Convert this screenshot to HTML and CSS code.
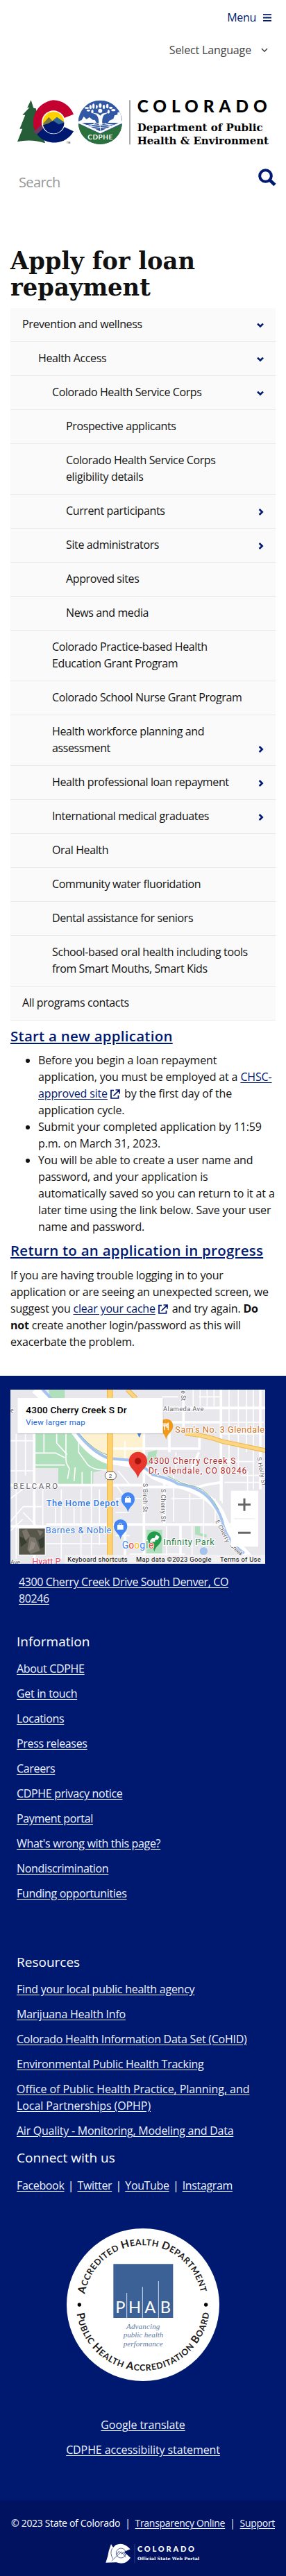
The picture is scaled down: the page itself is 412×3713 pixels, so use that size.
FILE: index.html
```html
<!DOCTYPE html>
<html lang="en">
<head>
<meta charset="utf-8">
<meta name="viewport" content="width=device-width, initial-scale=1">
<title>Apply for loan repayment</title>
<link rel="stylesheet" href="styles.css">
</head>
<body>
<svg width="0" height="0" class="defs">
  <symbol id="down" viewBox="0 0 10 8"><path d="M1 1.6 5 5.5 9 1.6" fill="none" stroke="currentColor" stroke-width="2.6"/></symbol>
  <symbol id="right" viewBox="0 0 8 10"><path d="M1.6 1 5.7 5 1.6 9" fill="none" stroke="currentColor" stroke-width="2.6"/></symbol>
  <symbol id="ext" viewBox="0 0 14 14"><path d="M5 1.7H1V13H11.5V9M7.5 1H13V6.5M12.6 1.4 4.5 9.5" fill="none" stroke="currentColor" stroke-width="1.7"/></symbol>
</svg>

<header class="header">
  <a class="menu-btn">Menu <svg width="12" height="11" viewBox="0 0 12 11"><path d="M0 1.2H12M0 5.5H12M0 9.8H12" stroke="currentColor" stroke-width="1.8"/></svg></a>
  <div class="lang">Select Language <svg width="10" height="7" viewBox="0 0 10 7"><path d="M1 1 5 5.2 9 1" fill="none" stroke="currentColor" stroke-width="1.6"/></svg></div>
  <svg class="logo" width="364" height="65" viewBox="75 431 1092 195">
    <path fill="#245d38" d="M134 432 118 464h9L97 496h12L85 556h12L75 612q60-14 120 6l-40-150-10-2Z"/>
    <path fill="#c3002f" d="M230 432a96 96 0 0 1 88 61l-42 17a50 50 0 0 0-86 40l-32 28A96 96 0 0 1 230 432Z"/>
    <path fill="#001970" d="M158 578l40-36a50 50 0 0 0 80 6l40 19a96 96 0 0 1-160 11Z"/>
    <path fill="#6d3a5d" d="M144 570l42-36 8 12-34 34Z"/>
    <circle cx="231" cy="528" r="51" fill="#fff"/><circle cx="231" cy="528" r="46" fill="#ffd100"/>
    <path fill="#7b7a3e" d="m187 532 24-27 18 20-20 45q-24-20-22-38Z"/><path fill="#31699b" d="m228 520 18-15 31 22-9 21Z"/>
    <path fill="#001970" d="m186 540 22-7 22-12 24 16 23-8a46 46 0 0 1-91 11Z"/>
    <text x="287" y="621" font-size="11" font-family="Liberation Sans" textLength="17">TM</text>
    <clipPath id="seal"><circle cx="433" cy="528" r="95"/></clipPath>
    <g clip-path="url(#seal)"><path fill="#3158a4" d="M338 432h191v192H338Z"/>
      <path fill="#fff" d="m338 525 15-7 9-15 12 12 12-9 15 11 9 1 7 12h50l5-9 18-8 5-15 13-3v-9l12-4 6 38 14-6v20H338Z"/>
      <path fill="#3158a4" d="M338 530h191l-96 46Z"/>
      <path fill="none" stroke="#fff" stroke-width="3" d="m375 541 60-8 65 8m-112 7 48-7 52 7m-90 8 37-7 42 8m-66-26-32 20m52-20 4 35m18-35 35 18"/>
      <path fill="none" stroke="#fff" stroke-width="8" d="m338 527 95 44 96-44"/><path fill="#2b713c" d="m338 534 95 44 96-44v90H338Z"/>
      <path fill="#fff" d="M426 538q4-28-10-43l-20-9 27 4 10 9 9-9 29-6-22 12q-11 18-6 42Z"/>
      <g fill="#fff"><circle cx="433" cy="478" r="9"/><ellipse cx="375" cy="466" rx="9" ry="4"/><ellipse cx="391" cy="462" rx="5" ry="9"/><ellipse cx="404" cy="458" rx="5" ry="11"/><ellipse cx="418" cy="461" rx="4" ry="9"/><ellipse cx="433" cy="456" rx="6" ry="10"/><ellipse cx="449" cy="461" rx="5" ry="9"/><ellipse cx="464" cy="458" rx="5" ry="10"/><ellipse cx="479" cy="465" rx="8" ry="5"/><ellipse cx="490" cy="475" rx="9" ry="5"/><ellipse cx="382" cy="477" rx="8" ry="4"/><ellipse cx="399" cy="481" rx="5" ry="8"/><ellipse cx="469" cy="482" rx="5" ry="8"/></g>
      <text x="379" y="603" fill="#fff" font-family="Lato" font-weight="700" font-size="30" textLength="108">CDPHE</text>
    </g>
    <path d="M561 432V624" stroke="#555" stroke-width="3"/>
    <text x="593" y="486" class="lato" font-size="73" textLength="561">COLORADO</text>
    <text x="593" y="567" class="slab" font-size="45" textLength="543" lengthAdjust="spacingAndGlyphs">Department of Public</text>
    <text x="593" y="622" class="slab" font-size="45" textLength="568" lengthAdjust="spacingAndGlyphs">Health &amp; Environment</text>
  </svg>
  <div class="search"><span>Search</span><svg width="26" height="26" viewBox="0 0 26 26"><circle cx="10.5" cy="10.5" r="8.3" fill="none" stroke="#001970" stroke-width="4"/><path d="m16.5 16.5 7.5 7" stroke="#001970" stroke-width="4.6"/></svg></div>
</header>

<main class="main">
  <h1 class="title"><span>Apply for loan</span><span>repayment</span></h1>
  <ul class="nav">
    <li class="l1">Prevention and wellness<svg class="down"><use href="#down"/></svg></li>
    <li class="l2">Health Access<svg class="down"><use href="#down"/></svg></li>
    <li class="l3">Colorado Health Service Corps<svg class="down"><use href="#down"/></svg></li>
    <li class="l4">Prospective applicants</li>
    <li class="l4">Colorado Health Service Corps<br>eligibility details</li>
    <li class="l4">Current participants<svg class="right"><use href="#right"/></svg></li>
    <li class="l4">Site administrators<svg class="right"><use href="#right"/></svg></li>
    <li class="l4">Approved sites</li>
    <li class="l4">News and media</li>
    <li class="l3">Colorado Practice-based Health<br>Education Grant Program</li>
    <li class="l3">Colorado School Nurse Grant Program</li>
    <li class="l3">Health workforce planning and<br>assessment<svg class="right"><use href="#right"/></svg></li>
    <li class="l3">Health professional loan repayment<svg class="right"><use href="#right"/></svg></li>
    <li class="l3">International medical graduates<svg class="right"><use href="#right"/></svg></li>
    <li class="l3">Oral Health</li>
    <li class="l3">Community water fluoridation</li>
    <li class="l3">Dental assistance for seniors</li>
    <li class="l3">School-based oral health including tools<br>from Smart Mouths, Smart Kids</li>
    <li class="l1">All programs contacts</li>
  </ul>
  <h2 class="h2"><a>Start a new application</a></h2>
  <ul class="steps">
    <li>Before you begin a loan repayment<br>application, you must be employed at a <a>CHSC-<br>approved site</a> <svg class="ext"><use href="#ext"/></svg> by the first day of the<br>application cycle.</li>
    <li>Submit your completed application by 11:59<br>p.m. on March 31, 2023.</li>
    <li>You will be able to create a user name and<br>password, and your application is<br>automatically saved so you can return to it at a<br>later time using the link below. Save your user<br>name and password.</li>
  </ul>
  <h2 class="h2"><a>Return to an application in progress</a></h2>
  <p class="para">If you are having trouble logging in to your<br>application or are seeing an unexpected screen, we<br>suggest you <a>clear your cache</a> <svg class="ext"><use href="#ext"/></svg> and try again. <b>Do<br>not</b> create another login/password as this will<br>exacerbate the problem.</p>
</main>

<footer class="footer">
  <svg class="map" width="367" height="251" viewBox="45 129 1101 753" font-family="Roboto">
    <path fill="#e8e7ec" d="M45 129h1101v753H45Z"/>
    <path fill="#fdf1cf" d="M340 318h278v110H445l-85-60Z"/>
    <path fill="#b0dfbc" d="M212 129h68v36h-68ZM150 318h165l50 70 100 62v24l-62 12v55H300l-48-5v-68H150Z"/>
    <path fill="#b0dfbc" d="M633 735h68v104h-68ZM640 400l40-10-10 55-38 10ZM843 720h22v30l28 5v14l-50-14Z"/>
    <g fill="none" stroke="#fff" stroke-width="5">
      <path d="M70 320V860M110 320V500M45 350H150M45 480H150M98 560 45 600M100 635 45 700M100 635H180M98 690 45 740M185 555V720M240 640V720M265 560V860M320 640V720M350 560V860M395 480V860M430 560V800M100 660l60 60M200 795H470M500 600H640M500 540l60 80M510 480l50 60M500 660H560M540 350V430M500 760H560"/>
      <path d="M835 129V200M865 129V200M895 129V200M925 129V200M990 129V480M1030 129V470M1065 129V400M1095 129V560M700 160H770M860 160H960M960 270H1140M960 320H1140M960 440H1100M750 500V700M820 580V700M880 590V860M930 600V700M960 480V620M1070 480V570M1040 500H1140M560 840H800M830 720V880M720 720V850M740 600H900M970 530H1140M760 400V480"/>
      <path d="M150 403h90l40 20M190 320v80M245 320v40l45 50M150 455h130M285 320v110q0 20 15 40l-8 45M325 465l-5 60M355 485v55M340 350v50l40 55q30 25 80 20"/>
    </g>
    <g fill="none" stroke="#fff" stroke-width="11"><path d="M148 320V882M45 542H625M200 712H1000M622 318V882M732 318V400M465 384H865M862 330v60M955 129V610M793 129V318M960 270H700M860 400l-40 90M45 720H200M780 712V882M1125 129V560M625 550H860q20-10 100-20M540 712V882M705 208H1146M710 500V720"/></g>
    <path d="M150 129q80 70 180 190 60 90 135 115l110 17q45 10 90 50 50 25 130 45 120 40 160 120 20 50 50 110l80 90" fill="none" stroke="#fff" stroke-width="32"/>
    <path d="M185 129q80 80 155 194 65 80 130 103l100 9q60 30 90 62 70 15 110 40 110 15 155 90 30 40 40 90 20 70 90 120" fill="none" stroke="#a5c3ef" stroke-width="12"/>
    <path d="M345 323q65 75 125 90m255 90q60 35 120 45 60 20 100 100" fill="none" stroke="#86b99b" stroke-width="3"/>
    <g fill="none"><path d="M475 129V882" stroke="#eeb64b" stroke-width="26"/><path d="M475 129V882" stroke="#fdd26f" stroke-width="20"/><path d="M550 129l38 38M800 318q90 8 160 35l186 39" stroke="#efb94e" stroke-width="20"/><path d="M550 129l38 38M800 318q90 8 160 35l186 39" stroke="#fdd683" stroke-width="13"/></g>
    <rect x="454" y="484" width="48" height="34" rx="16" fill="#fff" stroke="#666" stroke-width="3"/><text x="470" y="509" font-size="24" fill="#333">2</text>
    <g fill="#5f6368" font-size="26" stroke="#fff" stroke-width="5" paint-order="stroke">
      <text x="705" y="222" font-size="28" textLength="175">Alameda Ave</text><text x="57" y="557" font-size="34" textLength="192">BELCARO</text>
      <text transform="translate(617 534) rotate(90)" textLength="124">S Birch St</text><text transform="translate(695 558) rotate(90)" textLength="142">S Cherry St</text><text transform="translate(1111 422) rotate(80)" textLength="124">S Holly St</text><text transform="translate(783 133) rotate(90)">e St</text><text transform="translate(930 698) rotate(62)" textLength="105">E Cherry</text><text transform="translate(992 804) rotate(45)">Creek</text><text x="45" y="228">e</text><text x="45" y="884">Ave</text>
    </g>
    <path d="M748 285c0 27-25 30-30 60-4-27-29-35-29-60a29 29 0 0 1 59 0Z" fill="#f19a1a"/><path d="M711 274v30m-6-30v12h12v-12m10 30v-30q-7 5-6 17h6" fill="none" stroke="#fff" stroke-width="4"/>
    <path d="M592 315h20l-10 22Z" fill="#4b83d4"/>
    <circle cx="880" cy="827" r="17" fill="#a5c3ef"/>
    <g stroke="#fff" stroke-width="6" paint-order="stroke">
      <text x="757" y="315" font-size="38" fill="#cf7526" textLength="386">Sam's No. 3 Glendale</text>
      <text x="642" y="449" font-size="36" fill="#b3261e" textLength="376">4300 Cherry Creek S</text><text x="642" y="491" font-size="36" fill="#b3261e" textLength="424">Dr, Glendale, CO 80246</text>
      <text x="200" y="633" font-size="38" font-weight="500" fill="#3277df" textLength="313">The Home Depot</text><text x="197" y="749" font-size="38" fill="#3277df" textLength="284">Barnes &amp; Noble</text><text x="706" y="801" font-size="38" fill="#2b8245" textLength="220">Infinity Park</text><text x="139" y="884" font-size="38" fill="#e63f61">Hyatt P</text>
    </g>
    <path id="p" d="M582 602c0 28-25 30-29 58-4-28-29-32-29-58a29 29 0 0 1 58 0Z" fill="#4285f4"/><use href="#p" x="-32" y="117"/>
    <path d="M540 597h26v20h-26ZM507 714h26v20h-26Z" fill="#fff"/><path d="M547 597v-4q6-8 12 0v4M514 714v-4q6-8 12 0v4" fill="none" stroke="#fff" stroke-width="3"/>
    <path d="M698 772c0 28-27 32-31 58-4-26-30-32-30-58a30 30 0 0 1 61 0Z" fill="#219a4c"/><path d="M647 788q6-20 20-16l8-15 14 8-7 13q-16 0-11 9Z" fill="#fff"/>
    <path d="M636 438c0 32-30 37-40 74-9-37-39-42-39-74a39 39 0 0 1 79 0Z" fill="#e8372d"/><circle cx="596" cy="438" r="14" fill="#a5150d"/>
    <text y="816" font-size="42" stroke="#fff" stroke-width="5" paint-order="stroke" x="527 556 580 604 630 642"><tspan fill="#4285f4">G</tspan><tspan fill="#ea4335">o</tspan><tspan fill="#fbbc05">o</tspan><tspan fill="#4285f4">g</tspan><tspan fill="#34a853">l</tspan><tspan fill="#ea4335">e</tspan></text>
    <path fill="#000" opacity=".12" d="M76 168h630v154H76Z"/><path fill="#fff" d="M76 165h628v153H76Z"/>
    <text x="112" y="231" font-size="41" font-weight="500" textLength="436">4300 Cherry Creek S Dr</text><text x="112" y="281" font-size="34" fill="#1a67d8" textLength="256">View larger map</text>
    <path fill="#fff" d="M78 726h119v119H78ZM998 566h118v242H998Z"/><path stroke="#e5e5e5" stroke-width="3" d="M1012 687h90"/><path stroke="#666" stroke-width="9" d="M1029 626h54M1056 599v54M1029 748h54"/>
    <path fill="#56564b" d="M82 730h112v112H82Z"/><path fill="#7c756b" d="m95 740 20-8 15 30-20 20ZM128 765l25 5 20 55-40 15-15-20ZM160 735l28 8-15 20Z"/><path fill="#383d33" d="m85 765 18 5 13 20-26 20ZM165 780l25-15v45l-15 5Z"/><path fill="#938b81" d="m135 785 18 8-7 24-22 12Z"/>
    <path fill="#f3f2f5" opacity=".8" d="M280 843h866v39H280Z"/>
    <g font-size="28"><text x="292" y="872" textLength="259">Keyboard shortcuts</text><text x="588" y="872" textLength="325">Map data ©2023 Google</text><text x="951" y="872" textLength="176">Terms of Use</text></g>
  </svg>
  <p class="address"><a>4300 Cherry Creek Drive South Denver, CO<br>80246</a></p>
  <h3 class="h3 info">Information</h3>
  <ul class="links">
    <li><a>About CDPHE</a></li><li><a>Get in touch</a></li><li><a>Locations</a></li><li><a>Press releases</a></li><li><a>Careers</a></li><li><a>CDPHE privacy notice</a></li><li><a>Payment portal</a></li><li><a>What's wrong with this page?</a></li><li><a>Nondiscrimination</a></li><li><a>Funding opportunities</a></li>
  </ul>
  <h3 class="h3 resources">Resources</h3>
  <ul class="links wide">
    <li><a>Find your local public health agency</a></li><li><a>Marijuana Health Info</a></li><li><a>Colorado Health Information Data Set (CoHID)</a></li><li><a>Environmental Public Health Tracking</a></li><li class="office"><a>Office of Public Health Practice, Planning, and<br>Local Partnerships (OPHP)</a></li><li><a>Air Quality - Monitoring, Modeling and Data</a></li>
  </ul>
  <h3 class="h3 connect">Connect with us</h3>
  <p class="social"><a>Facebook</a><i>|</i><a>Twitter</a><i>|</i><a>YouTube</a><i>|</i><a>Instagram</a></p>
  <svg class="badge" width="220" height="220" viewBox="48 66 660 660">
    <circle cx="378" cy="396" r="330" fill="#fff"/>
    <path id="arc-top" d="M126.500 350A255 255 0 0 1 629 350" fill="none"/><path id="arc-low" d="M92 434A289 289 0 0 0 664 434" fill="none"/>
    <g font-family="Lato" font-weight="700" fill="#1c1a1b" font-size="37">
      <text textLength="706"><textPath href="#arc-top" textLength="706"><tspan font-size="46">A</tspan>CCREDITED <tspan font-size="46">H</tspan>EALTH <tspan font-size="46">D</tspan>EPARTMENT</textPath></text>
      <text textLength="826"><textPath href="#arc-low" textLength="826"><tspan font-size="46">P</tspan>UBLIC <tspan font-size="46">H</tspan>EALTH <tspan font-size="46">A</tspan>CCREDITATION <tspan font-size="46">B</tspan>OARD</textPath></text>
    </g>
    <circle cx="103" cy="396" r="8"/><circle cx="650" cy="396" r="8"/>
    <path fill="#3c6196" d="M250 220h258v233H250Z"/><path d="M308 345V453M376 319V453M445 294V453" stroke="#d4e2f2" stroke-width="3"/>
    <g fill="#fff" font-family="Lato" font-size="71"><text x="259" y="431">P</text><text x="315" y="431">H</text><text x="385" y="431">A</text><text x="452" y="431">B</text></g>
    <g fill="#6078a3" font-family="Liberation Serif" font-style="italic" font-size="33"><text x="306" y="500" textLength="145">Advancing</text><text x="293" y="538" textLength="173">public health</text><text x="293" y="577" textLength="171">performance</text></g>
  </svg>
  <p class="center"><a>Google translate</a><a>CDPHE accessibility statement</a></p>
  <div class="bottom">
    <p class="copy">© 2023 State of Colorado<i>|</i><a>Transparency Online</a><i>|</i><a>Support</a></p>
    <svg width="136" height="29" viewBox="458 679 408 87">
      <path fill="#fff" d="m482 682 9 15 11-11q34-15 63 18l-27 12 28 25q-22 34-61 20l-46 1 9-29 4-21Z"/><circle cx="525" cy="721" r="21" fill="none" stroke="#001970" stroke-width="2"/><path d="m484 755 43-40 18 24M487 700q-12 22 3 45M506 728l10-15 12 12 8-8 9 13" fill="none" stroke="#001970" stroke-width="2"/>
      <path d="M584 681V765" stroke="#49569a" stroke-width="2"/>
      <text x="596" y="716" class="lato white" font-size="33" textLength="246">COLORADO</text><text x="596" y="752" class="slab white" font-size="18" textLength="268" lengthAdjust="spacingAndGlyphs">Official State Web Portal</text>
    </svg>
  </div>
</footer>
</body>
</html>
```
FILE: styles.css
```css
* { box-sizing: border-box; }
body { margin: 0; background: #fff; color: #111; font: 16px/24px "Open Sans", sans-serif; letter-spacing: -.3px; white-space: nowrap; font-stretch: 92%; }
ul, p, h1, h2, h3 { margin: 0; padding: 0; list-style: none; }
i { font-style: normal; }
svg { letter-spacing: 0; font-stretch: normal; }
.defs { position: absolute; }
.header { height: 350px; display: flex; flex-direction: column; }
.menu-btn { margin: 13px 21px 0 auto; color: #001970; display: flex; align-items: center; gap: 10px; }
.lang { margin: 23px 26px 0 auto; color: #444; display: flex; align-items: center; gap: 14px; letter-spacing: -.15px; }
.logo { margin: 60px 0 0 25px; overflow: visible; flex: none; }
.lato { font-family: Lato, sans-serif; font-weight: 900; }
.slab { font-family: "DejaVu Serif", serif; font-weight: 700; }
.white { fill: #fff; }
.search { display: flex; justify-content: space-between; margin: 34px 14px 0 27px; color: #999; font-size: 20px; line-height: 40px; letter-spacing: -.6px; }
.main { padding: 0 15px; height: 1633px; }
.title { height: 94px; padding-top: 6px; font: 700 36px/38px "DejaVu Serif", serif; letter-spacing: 0; }
.title span { display: block; width: max-content; transform: scaleX(.938); transform-origin: left; }
.nav { background: #fafafa; width: 382px; letter-spacing: -.38px; }
.nav li { padding: 11px 16px 13px; border-bottom: 1px solid #e9e9e9; display: block; }
.nav svg { float: right; color: #001970; }
.nav .down { width: 10px; height: 8px; margin: 10px 1px 0 0; }
.nav .right { width: 8px; height: 10px; margin: 9px 1px 0 0; }
.nav .l1 { padding-left: 17px; }
.nav .l2 { padding-left: 40px; }
.nav .l3 { padding-left: 60px; }
.nav .l4 { padding-left: 80px; }
a { text-underline-offset: 2px; }
.h2 a, .steps a, .para a { color: #001970; text-decoration: underline; }
.h2 { font-size: 20.5px; line-height: 28px; font-weight: 600; padding-top: 8px; height: 45px; letter-spacing: .25px; }
.steps { padding-left: 40px; letter-spacing: -.15px; }
.steps li { list-style: disc; }
.steps + .h2 { height: 46px; }
.para { letter-spacing: -.2px; }
.ext { width: 14px; height: 14px; vertical-align: -2px; color: #001970; margin-right: 2px; }
.footer { background: #001970; color: #fff; height: 1730px; padding-top: 20px; display: flex; flex-direction: column; }
.footer a { color: #eef2ff; text-decoration: underline; }
.map { margin-left: 15px; flex: none; }
.address { padding: 14px 27px 0; height: 88px; letter-spacing: -.4px; }
.h3 { font-size: 19px; line-height: 28px; font-weight: 400; padding-left: 24px; height: 28px; letter-spacing: 0; }
.info { margin-top: 10px; }
.links { padding: 13px 24px 0; display: flex; flex-direction: column; gap: 12px; letter-spacing: -.33px; }
.wide { letter-spacing: -.25px; }
.office { letter-spacing: -.07px; }
.resources { margin-top: 73px; }
.connect { margin-top: 13px; }
.social { padding: 14px 24px 0; letter-spacing: -.35px; }
.social i { margin: 0 5.3px; }
.badge { margin: 50px auto 0 96px; flex: none; }
.center { display: flex; flex-direction: column; align-items: center; gap: 12px; padding-top: 51px; letter-spacing: -.1px; }
.bottom { background: #001260; margin-top: auto; height: 109px; font-size: 14px; display: flex; flex-direction: column; align-items: center; padding-top: 21px; }
.copy { width: 412px; padding-left: 16px; letter-spacing: -.3px; }
.copy i { margin: 0 7px; }
.bottom svg { margin: 17px 0 0 28px; overflow: visible; }
```
